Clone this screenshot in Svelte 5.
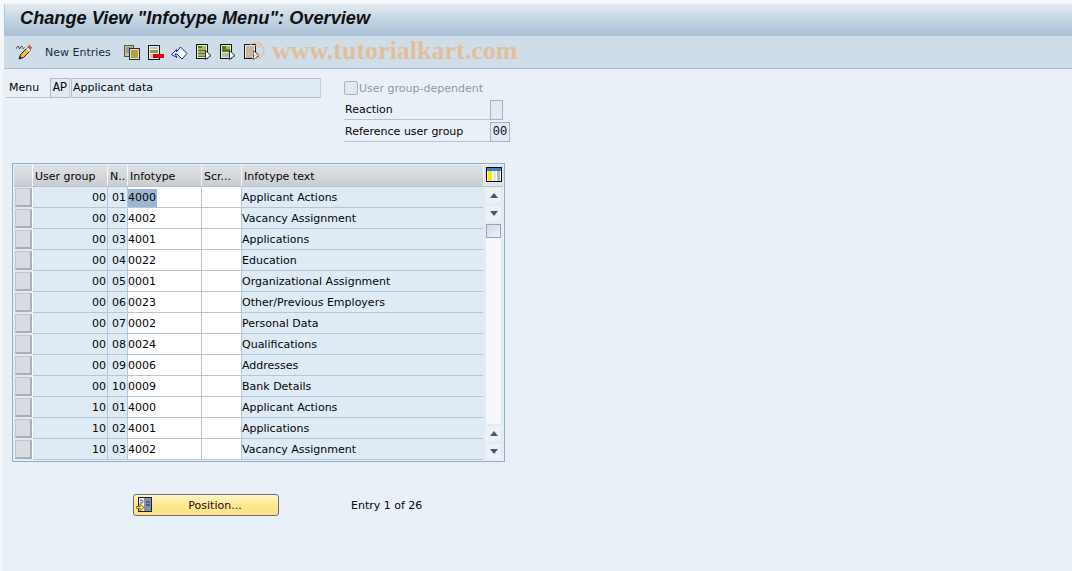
<script>
  const rows = [
    ['00', '01', '4000', 'Applicant Actions'],
    ['00', '02', '4002', 'Vacancy Assignment'],
    ['00', '03', '4001', 'Applications'],
    ['00', '04', '0022', 'Education'],
    ['00', '05', '0001', 'Organizational Assignment'],
    ['00', '06', '0023', 'Other/Previous Employers'],
    ['00', '07', '0002', 'Personal Data'],
    ['00', '08', '0024', 'Qualifications'],
    ['00', '09', '0006', 'Addresses'],
    ['00', '10', '0009', 'Bank Details'],
    ['10', '01', '4000', 'Applicant Actions'],
    ['10', '02', '4001', 'Applications'],
    ['10', '03', '4002', 'Vacancy Assignment']
  ];
</script>

<div class="screen">
  <div class="title">Change View "Infotype Menu": Overview</div>

  <div class="toolbar">
    <svg class="pencil" width="17" height="17" viewBox="0 0 17 17">
      <path d="M0.500 4.500c0-2 2-3 2.500-1s1 1.500 1.500 0 1.500-2 2 0 1 1 2 0" fill="none" stroke="#333" stroke-width="1"/>
      <path d="M3 15l1.500-4.500 7.500-7.500 3 3-7.500 7.500z" fill="#f4b93a" stroke="#222" stroke-width="1"/>
      <path d="M11 4l3 3" stroke="#e9e9e9" stroke-width="2.500"/>
      <path d="M12.500 1.500l3 3" stroke="#d0503c" stroke-width="2"/>
      <path d="M3 15l1-3 2 2z" fill="#222"/>
    </svg>
    <span class="tb-text">New Entries</span>
    <svg class="icon first" width="16" height="15" viewBox="0 0 16 15">
      <rect x="0.500" y="0.500" width="9" height="11" fill="#c8c48c" stroke="#555"/>
      <path d="M2 3h6M2 5h6M2 7h6" stroke="#777"/>
      <rect x="5.500" y="3.500" width="10" height="11" fill="#ffe94a" stroke="#1420b0"/>
      <path d="M7 6h7M7 8h7M7 10h7M7 12h7" stroke="#5a5a30"/>
    </svg>
    <svg class="icon del" width="16" height="15" viewBox="0 0 16 15">
      <rect x="0.500" y="0.500" width="11" height="14" fill="#eef0f2" stroke="#111"/>
      <path d="M2 3h8" stroke="#8a9098"/>
      <rect x="2" y="5" width="8" height="3" fill="#8aa030"/>
      <path d="M2 10h4M2 12h4" stroke="#8a9098"/>
      <rect x="5" y="9" width="11" height="4" fill="#e00010"/>
    </svg>
    <svg class="icon undo" width="17" height="15" viewBox="0 0 17 15">
      <path d="M0.500 9.500l5-5v2.500l4-5 6.500 6.500-5 5.500-5-5h-2l2 3.500z" fill="#fff" stroke="#1420b0" stroke-linejoin="round"/>
    </svg>
    {#each [0, 1, 2] as i}
      <svg class="icon sheet s{i}" width="16" height="16" viewBox="0 0 16 16">
        <rect x="0.500" y="0.500" width="11" height="14" fill={i === 2 ? '#f2f2f2' : '#e8ecdc'} stroke="#111"/>
        {#if i === 0}
          <rect x="2" y="2" width="8" height="11" fill="#5f7a18"/>
          <path d="M2 5h8M2 8h8M2 11h8" stroke="#e8ecdc"/>
          <rect x="6" y="2" width="4" height="3" fill="#a8c040"/>
        {:else if i === 1}
          <rect x="2" y="2" width="8" height="6" fill="#5f7a18"/>
          <rect x="6" y="2" width="4" height="3" fill="#a8c040"/>
          <path d="M2 10h8M2 12h8" stroke="#7c8a98"/>
        {:else}
          <path d="M2 3h8M2 5h8M2 7h8M2 9h8M2 11h8M2 13h6" stroke="#7a7a7a"/>
        {/if}
        <path d="M9.500 6.500l5.500 5-5.500 4z" fill="#fff" stroke="#333"/>
      </svg>
    {/each}
  </div>

  <div class="watermark">© www.tutorialkart.com</div>

  <div class="content">
    <div class="header-area">
      <div class="menu-row">
        <span class="label menu-label">Menu</span>
        <span class="field code">AP</span>
        <span class="field name">Applicant data</span>
      </div>
      <div class="options">
        <div class="check-row">
          <span class="checkbox"></span>
          <span>User group-dependent</span>
        </div>
        <div class="opt-row">
          <span class="label opt-label">Reaction</span>
          <span class="field small"></span>
        </div>
        <div class="opt-row">
          <span class="label opt-label">Reference user group</span>
          <span class="field small wide">00</span>
        </div>
      </div>
    </div>

    <div class="table">
      <div class="thead">
        <div class="corner"></div>
        <div class="th c-group">User group</div>
        <div class="th c-no">N..</div>
        <div class="th c-type">Infotype</div>
        <div class="th c-scr">Scr...</div>
        <div class="th c-text">Infotype text</div>
        <div class="config">
          <svg width="16" height="15" viewBox="0 0 16 15">
            <rect x="0.500" y="0.500" width="15" height="14" fill="#fff" stroke="#000"/>
            <rect x="1" y="1" width="14" height="3" fill="#3a80c8"/>
            <rect x="2" y="4" width="4" height="10" fill="#ffe800"/>
            <rect x="7" y="4" width="3" height="10" fill="#e4e4e4"/>
            <rect x="11" y="4" width="3" height="10" fill="#b8b8b8"/>
          </svg>
        </div>
      </div>
      <div class="tbody">
        <div class="rows">
          {#each rows as row, i}
            <div class="row">
              <div class="sel"><span></span></div>
              <div class="td c-group num">{row[0]}</div>
              <div class="td c-no num">{row[1]}</div>
              <div class="td c-type input">
                <span class:selected={i === 0}>{row[2]}</span>
              </div>
              <div class="td c-scr input"></div>
              <div class="td c-text">{row[3]}</div>
            </div>
          {/each}
        </div>
        <div class="scrollbar">
          <div class="sb-btn b1"><i class="up"></i></div>
          <div class="sb-btn"><i class="down"></i></div>
          <div class="track"><div class="thumb"></div></div>
          <div class="sb-btn b3"><i class="up"></i></div>
          <div class="sb-btn"><i class="down"></i></div>
        </div>
      </div>
    </div>

    <div class="footer">
      <button class="position">
        <svg width="16" height="16" viewBox="0 0 16 16">
          <rect x="2.500" y="0.500" width="13" height="14" fill="#7f8fb0" stroke="#222"/>
          <rect x="3" y="1" width="5" height="13" fill="#e8ecf2"/>
          <path d="M10 5h4M10 8h4" stroke="#2a3450"/>
          <path d="M4 3h2l1 1.500-1 1.500H4" fill="none" stroke="#555"/>
          <path d="M0.500 9.500h3.500V7l4 3.500-4 3.500v-2.500H0.500z" fill="#ffd820" stroke="#665a10" stroke-width="0.700"/>
        </svg>
        <span>Position...</span>
      </button>
      <span class="entry">Entry 1 of 26</span>
    </div>
  </div>
</div>

<style>
  :global(body) {
    margin: 0;
    background: #fff;
  }

  .screen {
    position: relative;
    width: 1072px;
    height: 571px;
    box-sizing: border-box;
    padding-top: 4px;
    overflow: hidden;
    font-family: "DejaVu Sans", sans-serif;
    font-size: 11px;
    color: #050505;
    background: #f4f7fa;
  }

  .title {
    height: 32px;
    margin-left: 4px;
    box-sizing: border-box;
    padding-left: 15px;
    border-left: 1px solid #b4c6d6;
    font-family: "Liberation Sans", sans-serif;
    font-size: 18.2px;
    font-style: italic;
    font-weight: bold;
    line-height: 28px;
    color: #111;
    background: linear-gradient(#e3ebf2, #c6d6e4 45%, #a9bfd5);
  }

  .toolbar {
    display: flex;
    align-items: center;
    height: 33px;
    margin-left: 4px;
    padding-left: 12px;
    box-sizing: border-box;
    border-bottom: 1px solid #a9b9c8;
    background: #cfdde9;
  }

  .tb-text {
    width: 79px;
    margin-left: 12px;
    color: #1c2c40;
    white-space: nowrap;
  }

  .icon { flex: none; }
  .first { margin-left: 0; }
  .del { margin-left: 8px; }
  .undo { margin-left: 7px; }
  .s0 { margin-left: 8px; }
  .s1 { margin-left: 8px; }
  .s2 { margin-left: 8px; }

  .watermark {
    position: absolute;
    top: 36px;
    left: 246px;
    font-family: "Liberation Serif", serif;
    font-size: 26px;
    font-weight: bold;
    color: #e8b888;
    opacity: 0.8;
    white-space: nowrap;
  }

  .content {
    height: 502px;
    margin-left: 3px;
    padding: 9px 0 0 3px;
    box-sizing: border-box;
    background: #e9f0f7;
  }

  .header-area {
    display: flex;
    align-items: flex-start;
    height: 85px;
  }

  .menu-row {
    display: flex;
    align-items: stretch;
    height: 20px;
    width: 315px;
  }

  .label {
    border-bottom: 1px solid #b6c4d0;
    line-height: 20px;
    box-sizing: border-box;
  }

  .menu-label {
    width: 44px;
    padding-left: 3px;
  }

  .field {
    box-sizing: border-box;
    border: 1px solid #b4bec8;
    border-right-color: #c6cfd8;
    background: #dfeaf3;
    line-height: 18px;
  }

  .code {
    width: 20px;
    margin-right: 1px;
    text-align: center;
    font-family: "Liberation Mono", monospace;
    font-size: 12px;
  }

  .name {
    width: 250px;
    padding-left: 1px;
  }

  .options {
    margin-left: 23px;
    width: 170px;
  }

  .check-row {
    display: flex;
    align-items: center;
    height: 20px;
    padding-left: 0;
    color: #8f99a3;
  }

  .checkbox {
    width: 12px;
    height: 12px;
    margin-right: 1px;
    border: 1px solid #aab4be;
    border-radius: 2px;
    background: #dfe8f0;
  }

  .opt-row {
    display: flex;
    height: 20px;
    margin-top: 2px;
  }

  .opt-label {
    width: 146px;
    padding-left: 1px;
  }

  .small {
    width: 13px;
    border-color: #aab4be;
  }

  .wide {
    width: 20px;
    text-align: center;
    font-family: "Liberation Mono", monospace;
    font-size: 12px;
  }

  .table {
    width: 493px;
    height: 299px;
    margin: 0 0 0 6px;
    box-sizing: border-box;
    border: 1px solid #8fafc8;
    padding: 1px 1px 0;
    background: #e9f0f7;
  }

  .thead {
    display: flex;
    height: 22px;
    border-bottom: 1px solid #b8c2cc;
    box-sizing: border-box;
    background: linear-gradient(#dfe2e5, #c9cdd1);
  }

  .corner {
    width: 18px;
    flex: none;
    border-right: 1px solid #fff;
    box-sizing: content-box;
  }

  .th {
    flex: none;
    box-sizing: border-box;
    padding: 1px 0 0 2px;
    line-height: 21px;
    border-right: 1px solid #f4f6f8;
    white-space: nowrap;
    overflow: hidden;
  }

  .c-group { width: 75px; }
  .c-no { width: 20px; }
  .c-type { width: 74px; }
  .c-scr { width: 40px; }
  .c-text { width: 242px; }

  .config {
    flex: none;
    width: 20px;
    display: flex;
    justify-content: center;
    padding-top: 2px;
    box-sizing: border-box;
    background: #dfe4e8;
  }

  .tbody {
    display: flex;
  }

  .rows {
    flex: none;
    width: 469px;
  }

  .row {
    display: flex;
    height: 21px;
  }

  .sel {
    flex: none;
    width: 19px;
    box-sizing: border-box;
    padding: 1px;
    border-right: 1px solid #fff;
    background: #e3e8ee;
  }

  .sel span {
    display: block;
    width: 17px;
    height: 19px;
    border-right: 2px solid #a8afb7;
    border-bottom: 2px solid #a8afb7;
    border-top: 1px solid #c0c6cc;
    border-left: 1px solid #c0c6cc;
    box-sizing: border-box;
    background: #d7dce2;
  }

  .td {
    flex: none;
    box-sizing: border-box;
    border-right: 1px solid #b8c6d4;
    border-bottom: 1px solid #b8c6d4;
    padding: 1px 0 0;
    line-height: 20px;
    background: #deeaf4;
    white-space: nowrap;
  }

  .num { text-align: right; padding-right: 1px; }

  .td.input {
    background: #fff;
  }

  .selected {
    background: #9db5d2;
    display: inline-block;
    width: 29px;
    height: 18px;
    line-height: 18px;
  }

  .scrollbar {
    flex: none;
    width: 20px;
    box-sizing: border-box;
    padding-left: 3px;
    display: flex;
    flex-direction: column;
    background: #e3ebf3;
  }

  .sb-btn {
    width: 15px;
    height: 15px;
    margin-top: 3px;
    background: #eef2f7;
    display: flex;
    align-items: center;
    justify-content: center;
  }

  .b1 { margin-top: 1px; }
  .b3 { margin-top: 2px; }

  .up, .down {
    width: 0;
    height: 0;
    border-left: 4px solid transparent;
    border-right: 4px solid transparent;
  }

  .up { border-bottom: 5px solid #4a5a6c; }
  .down { border-top: 5px solid #4a5a6c; }

  .track {
    width: 15px;
    height: 200px;
    margin-top: 3px;
    background: #f6f8fb;
  }

  .thumb {
    width: 15px;
    height: 14px;
    box-sizing: border-box;
    border: 1px solid #98a4b0;
    background: linear-gradient(135deg, #cfdbe5, #eef3f8);
  }

  .footer {
    display: flex;
    align-items: center;
    margin: 32px 0 0 127px;
  }

  .position {
    display: flex;
    align-items: center;
    width: 146px;
    height: 22px;
    padding: 0 0 0 2px;
    border: 1px solid #6e6e6e;
    border-radius: 3px;
    background: linear-gradient(#fff6c8, #fde88f 50%, #fbe28a);
    font: inherit;
    color: #111;
  }

  .position span {
    flex: 1;
    text-align: center;
  }

  .entry {
    margin-left: 72px;
  }
</style>
